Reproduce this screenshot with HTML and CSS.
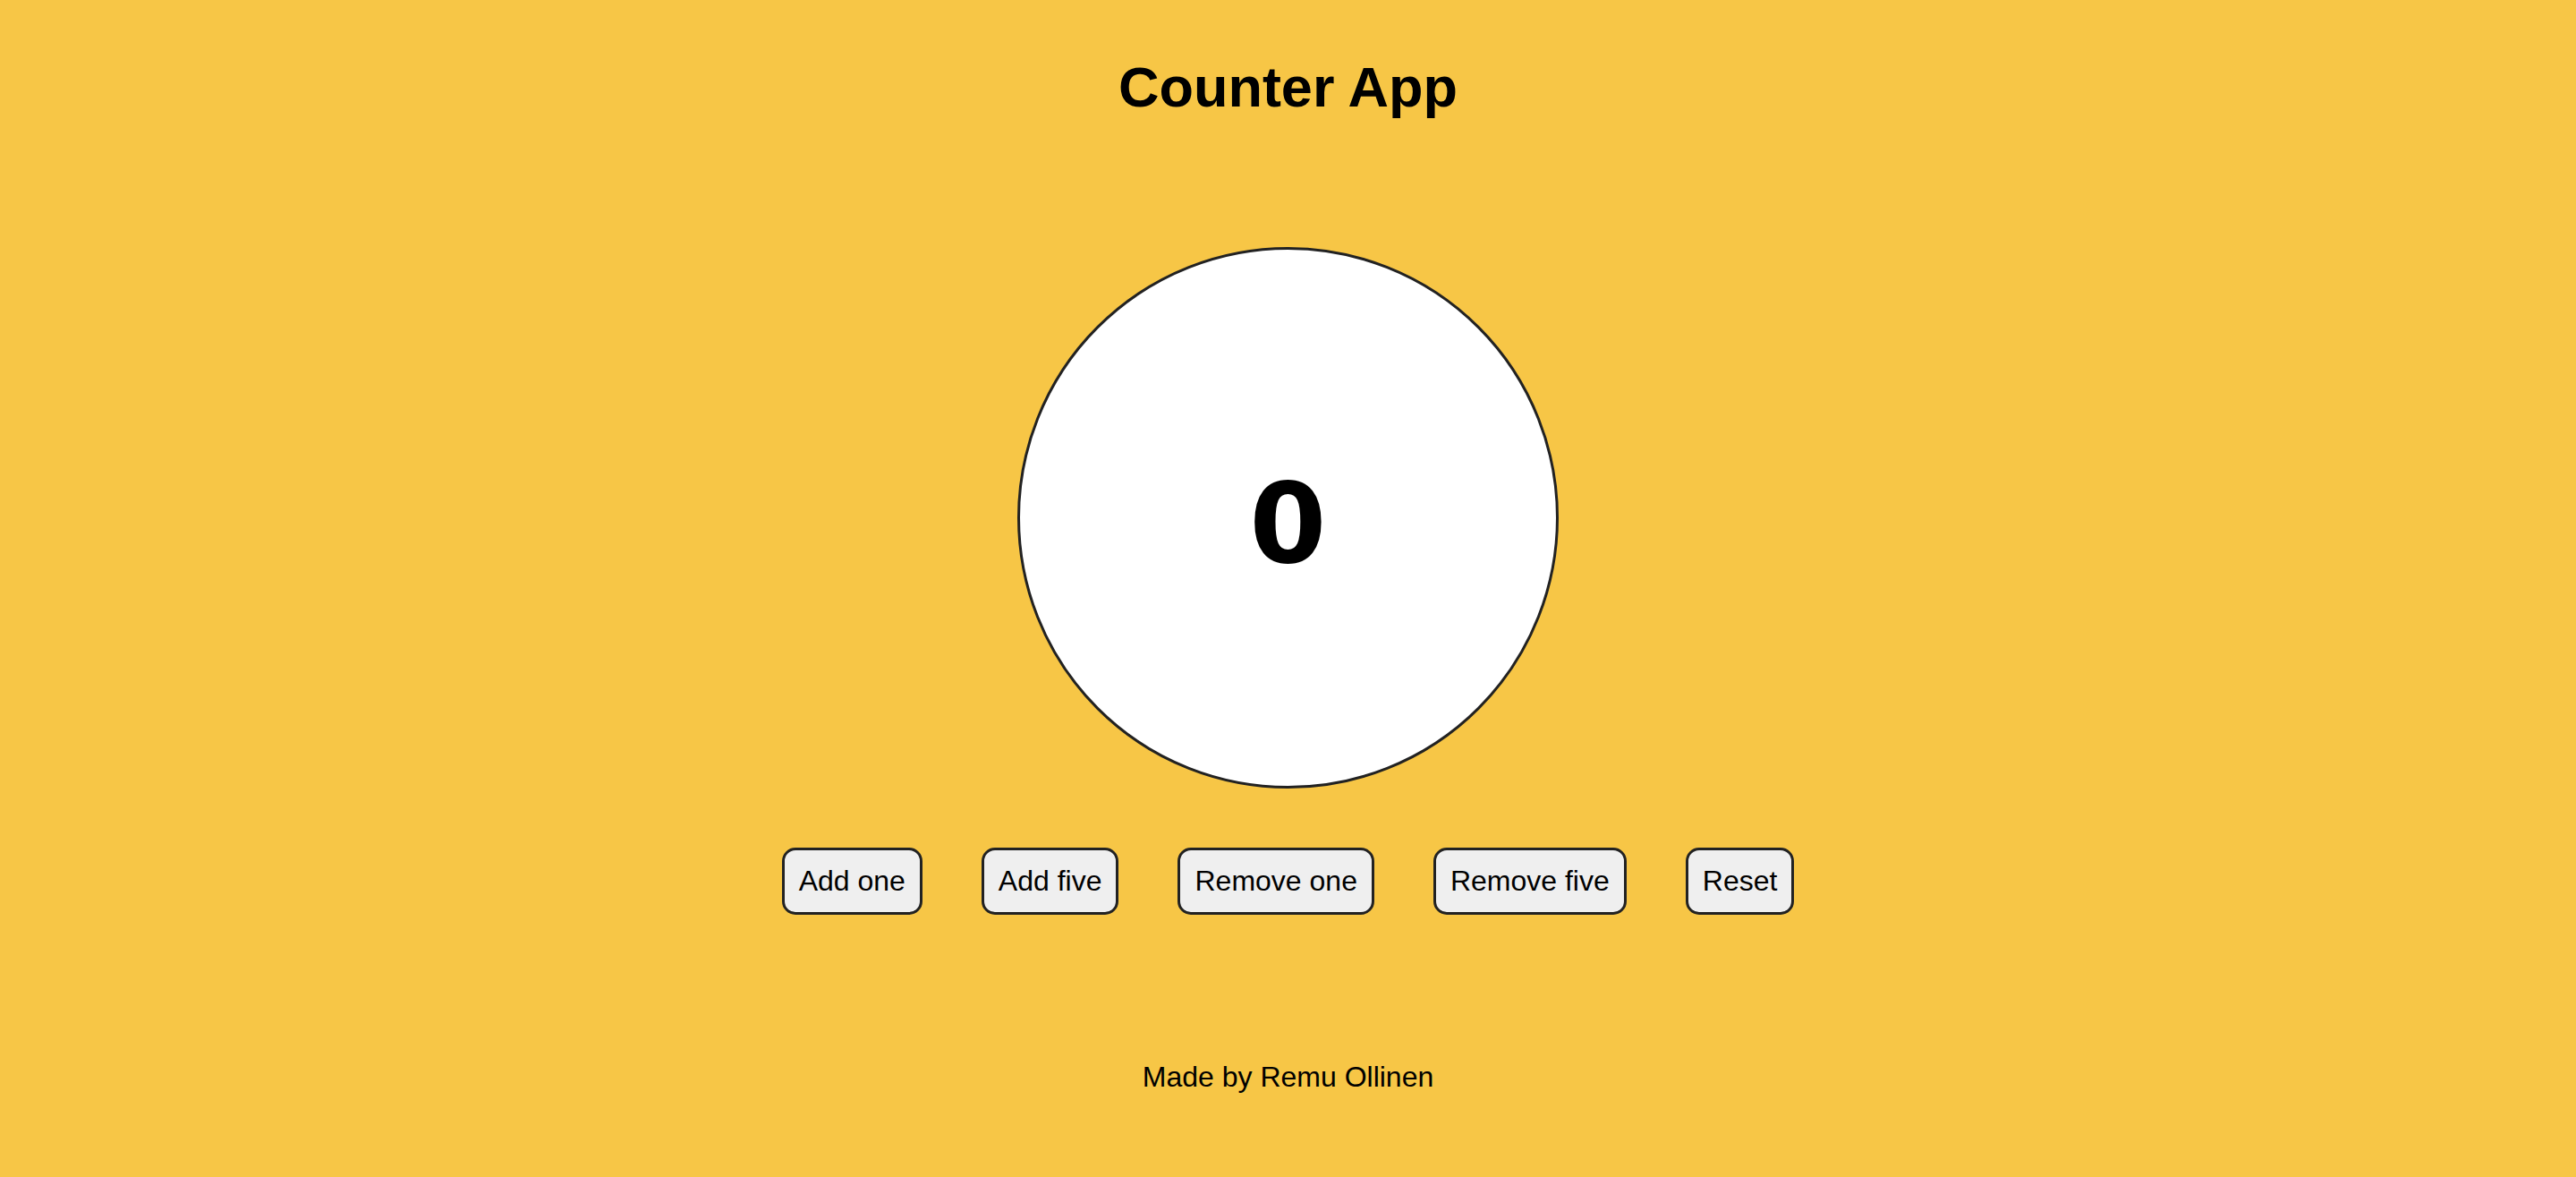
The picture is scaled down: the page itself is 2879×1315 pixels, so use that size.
FILE: index.html
```html
<!DOCTYPE html>
<html lang="en">
<head>
<meta charset="utf-8">
<title>Counter App</title>
<link rel="stylesheet" href="styles.css">
</head>
<body>
<main class="app">
  <h1 class="title">Counter App</h1>
  <div class="counter"><span class="count">0</span></div>
  <div class="controls">
    <button class="btn" type="button">Add one</button>
    <button class="btn" type="button">Add five</button>
    <button class="btn" type="button">Remove one</button>
    <button class="btn" type="button">Remove five</button>
    <button class="btn" type="button">Reset</button>
  </div>
  <footer class="footer">Made by Remu Ollinen</footer>
</main>
</body>
</html>
```
FILE: styles.css
```css
html, body {
  margin: 0;
  padding: 0;
}
body {
  background: #f7c646;
  font-family: "Liberation Sans", Arial, sans-serif;
  color: #000;
  min-height: 1315px;
}
.app {
  display: flex;
  flex-direction: column;
  align-items: center;
  padding-top: 61px;
}
.title {
  margin: 0;
  font-size: 63px;
  font-weight: 700;
  line-height: normal;
}
.counter {
  margin-top: 143px;
  width: 599px;
  height: 599px;
  border: 3px solid #222;
  border-radius: 50%;
  background: #fff;
  display: flex;
  align-items: center;
  justify-content: center;
}
.count {
  font-family: "DejaVu Sans", sans-serif;
  font-weight: 700;
  font-size: 124px;
  line-height: 1;
  padding-top: 12px;
}
.controls {
  margin-top: 66px;
  display: flex;
  gap: 66px;
}
.btn {
  font-family: "Liberation Sans", Arial, sans-serif;
  font-size: 32px;
  line-height: normal;
  padding: 16px;
  border: 3px solid #222;
  border-radius: 15px;
  background: #efefef;
  color: #000;
}
.footer {
  margin-top: 163px;
  font-size: 32px;
  line-height: normal;
}
```
